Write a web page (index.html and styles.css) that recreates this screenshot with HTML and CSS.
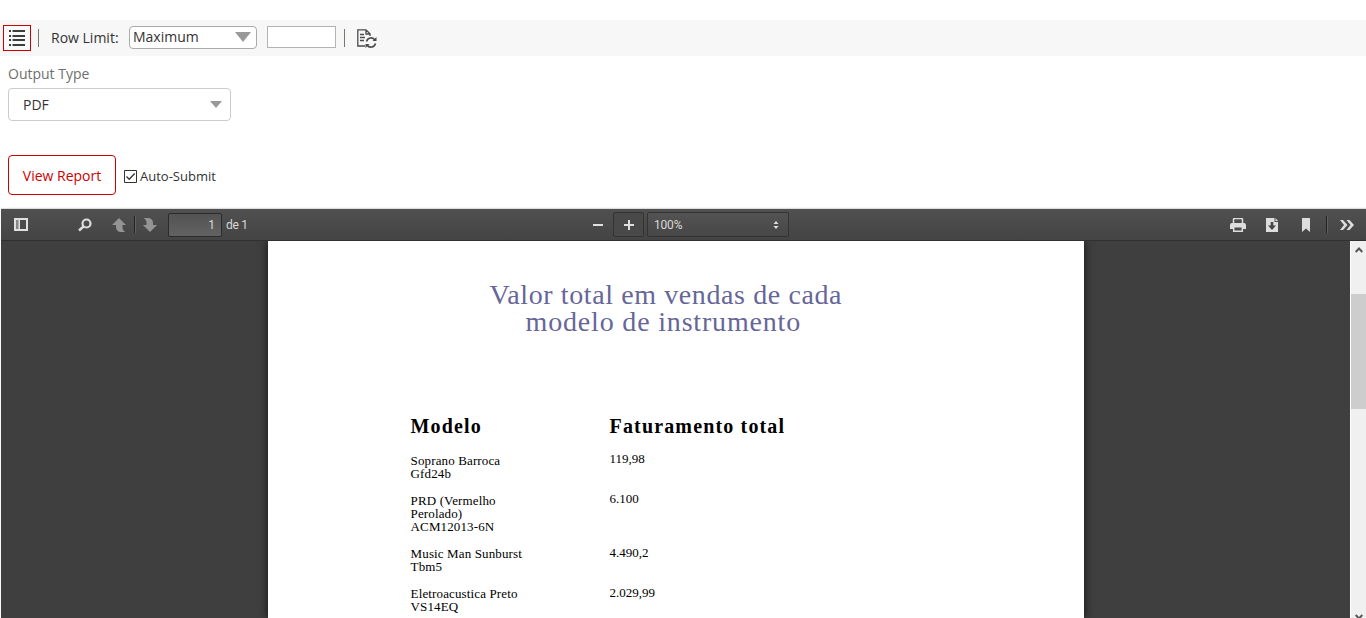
FILE: index.html
```html
<!DOCTYPE html>
<html lang="pt">
<head>
<meta charset="utf-8">
<title>Report</title>
<link rel="stylesheet" href="styles.css">
</head>
<body>
<div class="topbar">
  <button class="menu-btn"><svg width="16" height="16" viewBox="0 0 16 16" fill="#3a3f3b"><path d="M0 0h2v2H0zM3.500 0H16v2H3.500zM0 5h2v2H0zM3.500 5H16v2H3.500zM0 9h2v2H0zM3.500 9H16v2H3.500zM0 14h2v2H0zM3.500 14H16v2H3.500z"/></svg></button>
  <span class="sep sep-left"></span>
  <span class="row-label">Row Limit:</span>
  <div class="row-select"><span>Maximum</span><svg width="18" height="10" viewBox="0 0 18 10"><path d="M1 0h16l-8 10z" fill="#999"/></svg></div>
  <div class="row-input"></div>
  <span class="sep sep-right"></span>
  <svg class="refresh" width="20" height="20" viewBox="0 0 20 20" fill="none" stroke="#4b4b4b" stroke-width="1.3"><path d="M8 17H.8V.8H9l4 4V7M9 .8V5h4M3 5.500h4M3 8.500h5M3 11.500h4"/><path d="M9.500 12.500a4.700 4.700 0 0 1 8.500-1.500M18.500 14.500a4.700 4.700 0 0 1-8.500 1.500" stroke-width="1.600"/><path d="M19.500 8v4h-4zM8.500 19v-4h4z" fill="#4b4b4b" stroke="none"/></svg>
</div>
<div class="controls">
  <div class="out-label">Output Type</div>
  <div class="out-select"><span>PDF</span><svg width="12" height="7" viewBox="0 0 12 7"><path d="M0 0h12L6 7z" fill="#999"/></svg></div>
  <div class="actions">
    <button class="view-btn">View Report</button>
    <span class="check"><svg width="13" height="13" viewBox="0 0 13 13" fill="#fff" stroke="#333"><path d="M.5.5h12v12H.5z"/><path d="M2.500 6.500l2.700 2.700 5.500-5.700" fill="none" stroke-width="1.300"/></svg></span>
    <span class="check-label">Auto-Submit</span>
  </div>
</div>
<div class="viewer">
  <div class="pdfbar">
    <div class="group group-left">
      <svg class="i-side" width="14" height="13" viewBox="0 0 14 13"><path d="M0 0h14v13H0z" fill="#e0e0e0"/><path d="M2 2h2.500v9H2z" fill="#888"/><path d="M6 2h6v9H6z" fill="#4a4a4a"/></svg>
      <svg class="i-find" width="14" height="14" viewBox="0 0 14 14" fill="none" stroke="#ddd"><circle cx="8.500" cy="5.500" r="4" stroke-width="2.200"/><path d="M5.500 8.500l-4.500 4" stroke-width="2.400"/></svg>
      <svg class="i-up" width="15" height="14" viewBox="0 0 15 14" fill="#949494"><path d="M7 0l7 7h-3.500v2q0 3.500 3 5H8q-4-1-4-5V7H0z"/></svg>
      <span class="split"></span>
      <svg class="i-down" width="15" height="14" viewBox="0 0 15 14" fill="#949494"><path d="M8 14L1 7h3.500V5q0-3.500-3-5H7q4 1 4 5v2h4z"/></svg>
      <div class="page-num">1</div>
      <span class="page-of">de 1</span>
    </div>
    <div class="group group-mid">
      <svg class="i-minus" width="10" height="2"><path d="M0 0h10v2H0z" fill="#e0e0e0"/></svg>
      <div class="zoom-in"><svg width="10" height="10"><path d="M4 0h2v4h4v2H6v4H4V6H0V4h4z" fill="#e0e0e0"/></svg></div>
      <div class="zoom"><span>100%</span><svg width="6" height="8" viewBox="0 0 6 8"><path d="M3 0l2.500 3h-5zM3 8l2.500-3h-5z" fill="#ddd"/></svg></div>
    </div>
    <div class="group group-right">
      <svg width="16" height="14" viewBox="0 0 16 14"><path d="M3.500 5V1.500q0-1 1-1h7q1 0 1 1V5" fill="none" stroke="#ddd" stroke-width="1.500"/><path d="M2 5h12q2 0 2 2v4h-3V9.500H3V11H0V7q0-2 2-2z" fill="#ddd"/><path d="M3.700 9v4.200h8.600V9" fill="none" stroke="#ddd" stroke-width="1.500"/></svg>
      <svg class="i-save" width="12" height="14" viewBox="0 0 12 14"><path d="M0 0h8.500v4H12v10H0z" fill="#ddd"/><path d="M9.500 0L12 3H9.500z" fill="#ddd"/><path d="M4.700 4h2.600v3.500H10L6 12 2 7.500h2.700z" fill="#444"/></svg>
      <svg class="i-mark" width="8" height="14" viewBox="0 0 8 14"><path d="M0 0h8v14L4 10.500 0 14z" fill="#ddd"/></svg>
      <span class="split split-r"></span>
      <svg class="i-more" width="14" height="10" viewBox="0 0 14 10" fill="#ddd"><path d="M0 0h3l4.500 5L3 10H0l4-5zM6.500 0h3L14 5 9.500 10h-3l4-5z"/></svg>
    </div>
  </div>
  <div class="canvas">
    <main class="sheet">
      <h1 class="title"><span class="t1">Valor total em vendas de cada</span><span class="t2">modelo de instrumento</span></h1>
      <div class="row head"><span class="h-model">Modelo</span><span class="h-total">Faturamento total</span></div>
      <div class="row"><div class="model">Soprano Barroca<br>Gfd24b</div><div class="amount">119,98</div></div>
      <div class="row"><div class="model">PRD (Vermelho<br>Perolado)<br>ACM12013-6N</div><div class="amount">6.100</div></div>
      <div class="row"><div class="model">Music Man Sunburst<br>Tbm5</div><div class="amount amount-low">4.490,2</div></div>
      <div class="row"><div class="model">Eletroacustica Preto<br>VS14EQ</div><div class="amount amount-low">2.029,99</div></div>
    </main>
    <div class="scroll">
      <svg width="8" height="6" viewBox="0 0 8 6"><path d="M.7 5L4 1.500 7.300 5" fill="none" stroke="#555" stroke-width="1.900"/></svg>
      <div class="thumb"></div>
      <svg class="s-down" width="8" height="6" viewBox="0 0 8 6"><path d="M.7 1L4 4.500 7.300 1" fill="none" stroke="#555" stroke-width="1.900"/></svg>
    </div>
  </div>
</div>
</body>
</html>
```
FILE: styles.css
```css
* { box-sizing: border-box; }
body { margin: 0; height: 618px; overflow: hidden; background: #fff; font-family: "Open Sans", sans-serif; font-size: 14px; color: #333; display: flex; flex-direction: column; }
svg { display: block; flex: none; }
button { font: inherit; padding: 0; background: #fff; }
.topbar { margin-top: 20px; height: 36px; flex: none; background: #f7f7f7; display: flex; align-items: center; padding-left: 3px; }
.menu-btn { width: 28px; height: 26px; border: 1px solid #c00; background: #f9f9f9; display: flex; align-items: center; justify-content: center; }
.sep { width: 1px; height: 18px; background: #77786b; }
.sep-left { margin: 0 12px 0 7px; }
.row-label { width: 78px; white-space: nowrap; margin-bottom: 2px; }
.row-select { width: 128px; height: 23px; border: 1px solid #aaa; border-radius: 4px; background: #fff; display: flex; align-items: center; justify-content: space-between; padding: 0 4px 2px 3px; margin-bottom: 1px; }
.row-select span { line-height: 18px; }
.row-input { width: 69px; height: 22px; border: 1px solid #b3b3b3; background: #fff; margin: 0 8px 2px 10px; }
.refresh { margin: 1px 0 0 12px; }
.controls { height: 153px; flex: none; padding: 8px 0 0 8px; }
.out-label { height: 24px; line-height: 20px; color: #6f6f6f; }
.out-select { width: 223px; height: 33px; border: 1px solid #ccc; border-radius: 4px; display: flex; align-items: center; justify-content: space-between; padding: 0 8px 0 14px; }
.actions { display: flex; align-items: center; margin-top: 34px; height: 40px; }
.view-btn { width: 108px; height: 40px; border: 1px solid #c00; border-radius: 4px; color: #c00; padding-top: 1px; }
.check { margin: 3px 3px 0 8px; }
.check-label { font-size: 13px; padding-top: 2px; }
.viewer { flex: 1; min-height: 0; margin-left: 1px; display: flex; flex-direction: column; box-shadow: 0 -1px 1px #ddd; }
.pdfbar { height: 32px; flex: none; background: linear-gradient(#505050, #444); border-bottom: 1px solid #303030; display: flex; font-family: Roboto, sans-serif; font-size: 12px; color: #d9d9d9; }
.group { display: flex; align-items: center; }
.group-left { width: 591px; padding-left: 13px; }
.i-find { margin-left: 50px; }
.i-up { margin-left: 20px; }
.split { width: 1px; height: 17px; background: #242424; box-shadow: 1px 0 #606060; margin: 0 7px 0 7px; }
.page-num { width: 54px; height: 24px; border: 1px solid #2b2b2b; border-radius: 2px; background: linear-gradient(#535353, #626262); margin-left: 11px; text-align: right; line-height: 23px; padding-right: 6px; }
.page-of { margin-left: 4px; letter-spacing: -0.3px; }
.group-mid { width: 197px; }
.zoom-in { width: 32px; height: 25px; margin-left: 10px; border: 1px solid #333; border-radius: 2px; background: #494949; display: flex; align-items: center; justify-content: center; }
.i-minus { margin-left: 1px; }
.zoom { width: 142px; height: 25px; margin-left: 3px; border: 1px solid #333; border-radius: 2px; background: linear-gradient(#535353, #474747); display: flex; flex: none; align-items: center; justify-content: space-between; padding: 0 9px 0 6px; }
.zoom span { letter-spacing: -0.2px; }
.group-right { margin-left: auto; padding-right: 12px; }
.i-save { margin-left: 20px; }
.i-mark { margin-left: 24px; }
.split-r { margin: 0 13px 0 16px; }
.canvas { flex: 1; min-height: 0; background: #3f3f3f; display: flex; overflow: hidden; }
.sheet { width: 816px; margin-left: 267px; background: #fff; box-shadow: 0 0 9px #111; color: #000; font-family: "Liberation Serif", serif; font-size: 13px; line-height: 13px; padding: 40px 0 0 142.6px; }
.title { margin: 0; font-size: 28px; font-weight: 400; line-height: 27px; height: 134px; color: #666699; white-space: nowrap; }
.title span { display: block; }
.t1 { padding-left: 79px; letter-spacing: 0.6px; }
.t2 { padding-left: 115px; letter-spacing: 0.82px; }
.row { display: grid; grid-template-columns: 199px 1fr; margin-bottom: 14px; }
.head { font-size: 20px; line-height: 22px; margin-bottom: 17px; font-weight: 700; letter-spacing: 1.15px; }
.model { letter-spacing: 0.13px; }
.amount { margin-top: -2px; }
.amount-low { margin-top: -1px; }
.scroll { width: 16px; margin-left: auto; background: #f0f0f0; border-left: 1px solid #fff; display: flex; flex-direction: column; align-items: center; padding-top: 6px; flex: none; }
.thumb { width: 15px; height: 115px; background: #cdcdcd; margin-top: 41px; flex: none; }
.s-down { margin-top: 205px; }
```
